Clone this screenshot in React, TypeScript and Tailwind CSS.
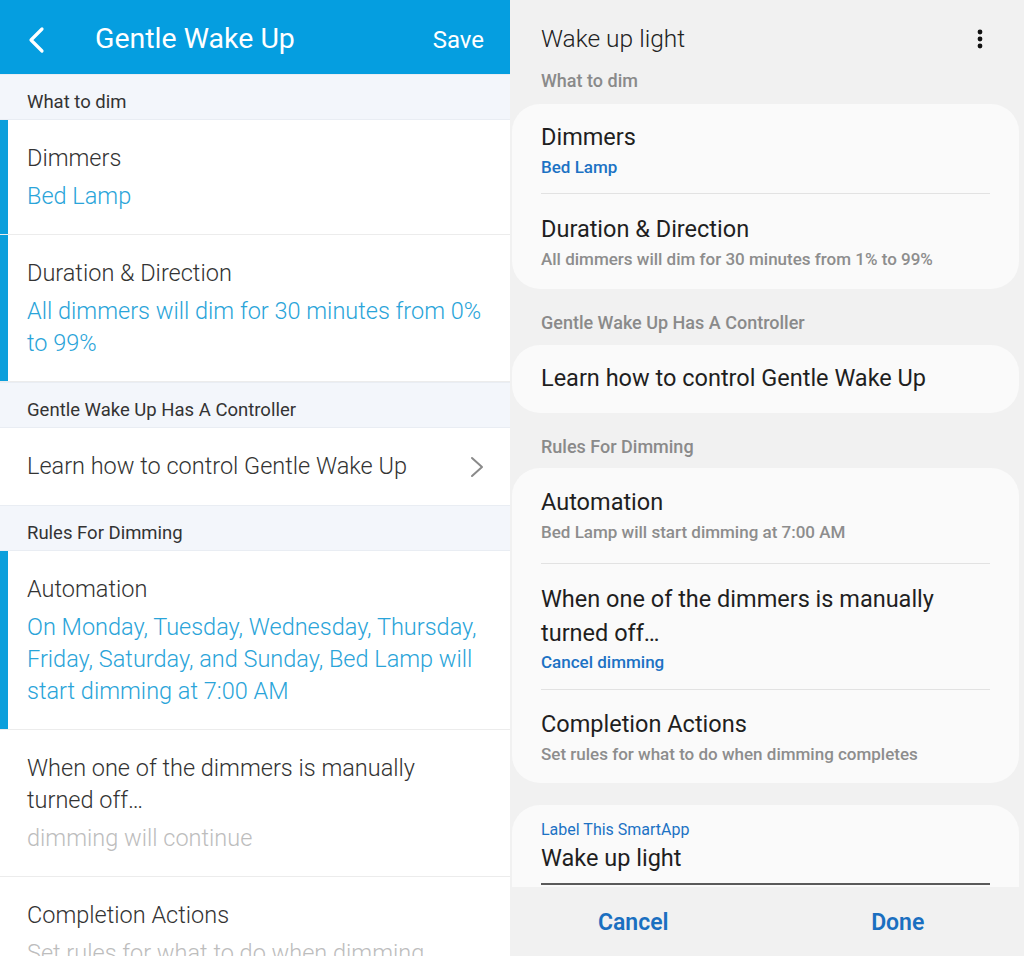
import React from "react";

const font = { fontFamily: "Roboto, 'Noto Sans', sans-serif" };

function LeftSection({ label }: { label: string }) {
  return (
    <div className="h-[46px] pt-[12px] flex items-center px-[27px] bg-[#f3f6fb] border-y border-[#e9edf3] text-[18.5px] text-[#333]">
      {label}
    </div>
  );
}

function LeftItem({
  title,
  sub,
  subColor,
  marked,
}: {
  title: React.ReactNode;
  sub: React.ReactNode;
  subColor: string;
  marked?: boolean;
}) {
  return (
    <div className="flex border-b border-[#ececec] bg-white">
      <div className={`w-[8px] shrink-0 ${marked ? "bg-[#0b9fdc]" : ""}`} />
      <div className="pl-[19px] pr-[20px] pt-[22px] pb-[22px]">
        <div className="text-[23.5px] leading-[32px] font-light text-[#333]">{title}</div>
        <div className={`text-[23.5px] leading-[32px] font-light mt-[6px] ${subColor}`}>{sub}</div>
      </div>
    </div>
  );
}

function RightLabel({ label, className = "" }: { label: string; className?: string }) {
  return (
    <div className={`px-[29px] text-[18px] leading-[20px] font-medium text-[#8a8a8a] ${className}`}>
      {label}
    </div>
  );
}

function RightItem({
  title,
  sub,
  blue,
  className = "",
}: {
  title: React.ReactNode;
  sub: string;
  blue?: boolean;
  className?: string;
}) {
  return (
    <div className={`px-[29px] ${className}`}>
      <div className="text-[23.5px] leading-[28px] text-[#1f1f1f]">{title}</div>
      <div
        className={`mt-[6px] text-[17px] leading-[20px] font-medium ${
          blue ? "text-[#1c72c4]" : "text-[#8d8d8d]"
        }`}
      >
        {sub}
      </div>
    </div>
  );
}

function Divider() {
  return <div className="mx-[29px] h-px bg-[#e2e2e2]" />;
}

export default function App() {
  return (
    <div className="flex h-[956px] w-[1024px] overflow-hidden" style={font}>
      {/* old app */}
      <div className="w-[510px] shrink-0 bg-white">
        <div className="h-[74px] bg-[#059ee0] flex items-center px-[26px] pt-[5px] text-white">
          <svg width="22" height="28" viewBox="0 0 22 28">
            <path d="M16 3 L5 14 L16 25" fill="none" stroke="white" strokeWidth="3.2" strokeLinecap="round" strokeLinejoin="round" />
          </svg>
          <div className="ml-[47px] text-[28.5px] flex-1">Gentle Wake Up</div>
          <div className="text-[24px]">Save</div>
        </div>
        <LeftSection label="What to dim" />
        <LeftItem title="Dimmers" sub="Bed Lamp" subColor="text-[#2aa4d9]" marked />
        <LeftItem
          title="Duration & Direction"
          sub={
            <>
              All dimmers will dim for 30 minutes from 0%
              <br />
              to 99%
            </>
          }
          subColor="text-[#2aa4d9]"
          marked
        />
        <LeftSection label="Gentle Wake Up Has A Controller" />
        <div className="h-[77px] flex items-center pl-[27px] pr-[24px] bg-white">
          <div className="flex-1 text-[23.5px] font-light text-[#333]">Learn how to control Gentle Wake Up</div>
          <svg width="18" height="24" viewBox="0 0 18 24">
            <path d="M4 3 L14 12 L4 21" fill="none" stroke="#8a8a8a" strokeWidth="2" strokeLinecap="round" strokeLinejoin="round" />
          </svg>
        </div>
        <LeftSection label="Rules For Dimming" />
        <LeftItem
          title="Automation"
          sub={
            <>
              On Monday, Tuesday, Wednesday, Thursday,
              <br />
              Friday, Saturday, and Sunday, Bed Lamp will
              <br />
              start dimming at 7:00 AM
            </>
          }
          subColor="text-[#2aa4d9]"
          marked
        />
        <LeftItem
          title={
            <>
              When one of the dimmers is manually
              <br />
              turned off…
            </>
          }
          sub="dimming will continue"
          subColor="text-[#bdbdbd]"
        />
        <LeftItem
          title="Completion Actions"
          sub="Set rules for what to do when dimming completes"
          subColor="text-[#bdbdbd]"
        />
      </div>

      {/* new app */}
      <div className="flex-1 flex flex-col bg-[#f1f1f1] pl-[2px] pr-[5px]">
        <div className="flex items-center pl-[29px] pr-[36px] pt-[23px]">
          <div className="flex-1 text-[24.5px] leading-[32px] font-light text-[#222]">Wake up light</div>
          <svg width="6" height="20" viewBox="0 0 6 20">
            <circle cx="3" cy="3" r="2.4" fill="#111" />
            <circle cx="3" cy="10" r="2.4" fill="#111" />
            <circle cx="3" cy="17" r="2.4" fill="#111" />
          </svg>
        </div>
        <RightLabel label="What to dim" className="pt-[16px] pb-[13px]" />
        <div className="rounded-[28px] bg-[#fafafa] pt-[19px] pb-[20px]">
          <RightItem title="Dimmers" sub="Bed Lamp" blue className="pb-[16px]" />
          <Divider />
          <RightItem
            title="Duration & Direction"
            sub="All dimmers will dim for 30 minutes from 1% to 99%"
            className="pt-[21px]"
          />
        </div>
        <RightLabel label="Gentle Wake Up Has A Controller" className="pt-[24px] pb-[12px]" />
        <div className="h-[68px] rounded-[28px] bg-[#fafafa] flex items-center px-[29px] text-[23.5px] text-[#1f1f1f]">
          Learn how to control Gentle Wake Up
        </div>
        <RightLabel label="Rules For Dimming" className="pt-[24px] pb-[11px]" />
        <div className="rounded-[28px] bg-[#fafafa] pb-[19px]">
          <RightItem
            title="Automation"
            sub="Bed Lamp will start dimming at 7:00 AM"
            className="pt-[20px] pb-[21px]"
          />
          <Divider />
          <div className="px-[29px] pt-[18px] pb-[17px]">
            <div className="text-[23.5px] leading-[34px] text-[#1f1f1f]">
              When one of the dimmers is manually
              <br />
              turned off…
            </div>
            <div className="mt-[2px] text-[17px] leading-[20px] font-medium text-[#1c72c4]">
              Cancel dimming
            </div>
          </div>
          <Divider />
          <RightItem
            title="Completion Actions"
            sub="Set rules for what to do when dimming completes"
            className="pt-[20px]"
          />
        </div>
        <div className="mt-[22px] rounded-t-[28px] bg-[#fafafa] px-[29px] pt-[15px]">
          <div className="text-[16px] leading-[20px] text-[#1c72c4]">Label This SmartApp</div>
          <div className="mt-[4px] pb-[11px] text-[23.5px] leading-[28px] text-[#1f1f1f] border-b-2 border-[#5a5a5a]">
            Wake up light
          </div>
          <div className="h-[2px]" />
        </div>
        <div className="flex-1 flex items-start pt-[22px] bg-[#f1f1f1]">
          <div className="flex-1 text-center pr-[16px] text-[23px] leading-[28px] font-semibold text-[#1a6fc0]">
            Cancel
          </div>
          <div className="flex-1 text-center pl-[6px] text-[23px] leading-[28px] font-semibold text-[#1a6fc0]">
            Done
          </div>
        </div>
      </div>
    </div>
  );
}
